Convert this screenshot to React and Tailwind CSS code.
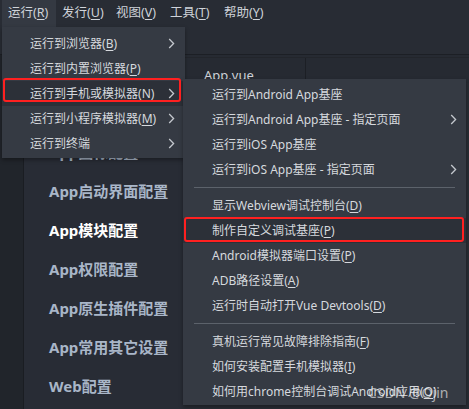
import React from 'react';

const FONT = "font-['Noto_Sans','Noto_Sans_CJK_SC',sans-serif]";

// thin ">" arrow used in menus
const Chevron = () => (
  <svg width="7" height="11" viewBox="0 0 7 11" className="shrink-0">
    <path d="M1.2 1 L5.6 5.5 L1.2 10" fill="none" stroke="#c4c8ce" strokeWidth="1.3" />
  </svg>
);

// label with underlined mnemonic letter, e.g. "运行到浏览器(B)"
const Label = ({ text }) => {
  const m = text.match(/^(.*)\((.)\)$/);
  if (!m) return <span>{text}</span>;
  return (
    <span>
      {m[1]}(<span className="underline underline-offset-2">{m[2]}</span>)
    </span>
  );
};

const topMenus = ['运行(R)', '发行(U)', '视图(V)', '工具(T)', '帮助(Y)'];

const runMenu = [
  { label: '运行到浏览器(B)', sub: true },
  { label: '运行到内置浏览器(P)' },
  { label: '运行到手机或模拟器(N)', sub: true, active: true },
  { label: '运行到小程序模拟器(M)', sub: true },
  { label: '运行到终端', sub: true },
];

const phoneMenu = [
  { label: '运行到Android App基座' },
  { label: '运行到Android App基座 - 指定页面', sub: true },
  { label: '运行到iOS App基座' },
  { label: '运行到iOS App基座 - 指定页面', sub: true },
  { sep: true },
  { label: '显示Webview调试控制台(D)' },
  { label: '制作自定义调试基座(P)', active: true },
  { label: 'Android模拟器端口设置(P)' },
  { label: 'ADB路径设置(A)' },
  { label: '运行时自动打开Vue Devtools(D)' },
  { sep: true },
  { label: '真机运行常见故障排除指南(F)' },
  { label: '如何安装配置手机模拟器(I)' },
  { label: '如何用chrome控制台调试Android应用(O)' },
];

const sideItems = [
  '基础配置',
  'App图标配置',
  'App图标配置',
  'App启动界面配置',
  'App模块配置',
  'App权限配置',
  'App原生插件配置',
  'App常用其它设置',
  'Web配置',
];

export default function App() {
  return (
    <div className={`relative w-[469px] h-[409px] overflow-hidden bg-[#262a32] text-[12px] ${FONT}`}>
      {/* top bar */}
      <div className="h-[55px] bg-[#282c34] border-b border-[#1c1f25]">
        <div className="flex h-[27px] pl-[2px]">
          {topMenus.map((t, i) => (
            <div
              key={t}
              className={`w-[54px] pl-[6px] flex items-center text-[12.5px] text-[#cfd3d9] ${i === 0 ? 'bg-[#343942]' : ''}`}
            >
              <Label text={t} />
            </div>
          ))}
        </div>
      </div>

      {/* body */}
      <div className="flex h-[354px]">
        <div className="w-[24px] bg-[#21252b] border-r border-[#1a1d22]" />
        <div className="w-[159px] bg-[#282c35] pl-[25px]">
          {sideItems.map((t, i) => (
            <div
              key={i}
              className={`h-[39px] flex items-center text-[15px] font-bold whitespace-nowrap ${i === 4 ? 'text-white' : 'text-[#a9b6c8]'}`}
            >
              {t}
            </div>
          ))}
        </div>
        <div className="flex-1 flex flex-col">
          <div className="h-[26px] mt-[2px] flex border-t border-[#22252b]">
            <div className="w-[123px] border-r border-[#1c1f25] pl-[21px] pt-[8px] text-[13px] text-[#cdd1d7]">
              App.vue
            </div>
          </div>
          <div className="flex-1 bg-[#282c34]" />
        </div>
      </div>

      {/* run dropdown */}
      <div className="absolute left-[2px] top-[27px] w-[183px] bg-[#353a43] pt-[4px] pb-[2px] shadow-[0_2px_4px_rgba(0,0,0,0.35)]">
        {runMenu.map((it) => (
          <div
            key={it.label}
            className={`h-[25px] flex items-center pl-[28px] pr-[10px] text-[#d6d9de] whitespace-nowrap ${it.active ? 'bg-[#2c3038]' : ''}`}
          >
            <div className="flex-1">
              <Label text={it.label} />
            </div>
            {it.sub && <Chevron />}
          </div>
        ))}
      </div>

      {/* phone / emulator submenu */}
      <div className="absolute left-[183px] top-[79px] w-[283px] bg-[#353a43] pt-[3px] pb-[1px] shadow-[0_2px_4px_rgba(0,0,0,0.35)]">
        {phoneMenu.map((it, i) =>
          it.sep ? (
            <div key={i} className="h-[11px] flex items-center px-[11px]">
              <div className="h-px w-full bg-[#5c626b]" />
            </div>
          ) : (
            <div
              key={i}
              className={`h-[25px] flex items-center pl-[29px] pr-[9px] text-[#d6d9de] whitespace-nowrap ${it.active ? 'bg-[#2c3038]' : ''}`}
            >
              <div className="flex-1">
                <Label text={it.label} />
              </div>
              {it.sub && <Chevron />}
            </div>
          )
        )}
      </div>

      {/* red annotation boxes */}
      <div className="absolute left-[3px] top-[78px] w-[178px] h-[24px] border-2 border-[#ff2020] rounded-[3px]" />
      <div className="absolute left-[184px] top-[217px] w-[280px] h-[25px] border-2 border-[#ff2020] rounded-[3px]" />

      {/* watermark */}
      <div className="absolute left-[368px] top-[382px] text-[14px] text-white/60 whitespace-nowrap">
        CSDN @Ojin
      </div>
    </div>
  );
}
